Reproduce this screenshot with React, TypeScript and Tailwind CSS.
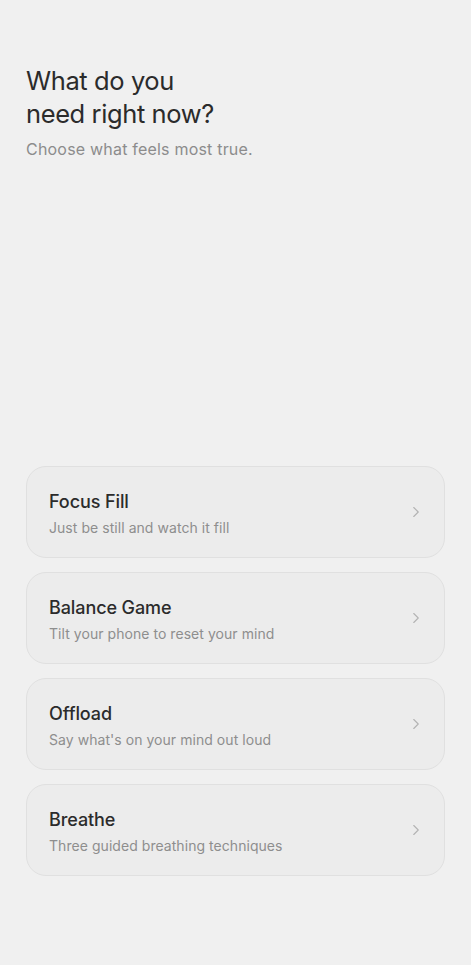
import { ChevronRight } from "lucide-react";

const OPTIONS = [
  { title: "Focus Fill", desc: "Just be still and watch it fill" },
  { title: "Balance Game", desc: "Tilt your phone to reset your mind" },
  { title: "Offload", desc: "Say what's on your mind out loud" },
  { title: "Breathe", desc: "Three guided breathing techniques" },
];

const App = () => {
  return (
    <div
      className="min-h-screen bg-[#f0f0f0] flex flex-col px-[26px] pt-[64px] pb-[89px]"
      style={{ fontFamily: "Inter, 'Noto Sans', sans-serif" }}
    >
      <div>
        <h1 className="text-[25.5px] leading-[33px] text-[#2b2b2b] tracking-[-0.4px]">
          What do you
          <br />
          need right now?
        </h1>
        <p className="mt-[8px] text-[16px] leading-[22px] text-[#8c8c8c] tracking-[0.2px]">
          Choose what feels most true.
        </p>
      </div>

      <div className="flex-1" />

      <div className="flex flex-col gap-[14px]">
        {OPTIONS.map((item) => (
          <button
            key={item.title}
            className="h-[92px] w-full rounded-[20px] border border-[#e0e0e0] bg-[#ececec] pl-[22px] pr-[19px] pt-[4px] flex items-center justify-between text-left"
          >
            <div className="flex flex-col">
              <span className="text-[18px] leading-[24px] font-medium text-[#2b2b2b] tracking-[-0.1px]">
                {item.title}
              </span>
              <span className="mt-[4px] text-[14px] leading-[20px] text-[#8e8e8e] tracking-[0.05px]">
                {item.desc}
              </span>
            </div>
            <ChevronRight size={18} strokeWidth={1.5} className="text-[#b3b3b3] -mt-[4px]" />
          </button>
        ))}
      </div>
    </div>
  );
};

export default App;
